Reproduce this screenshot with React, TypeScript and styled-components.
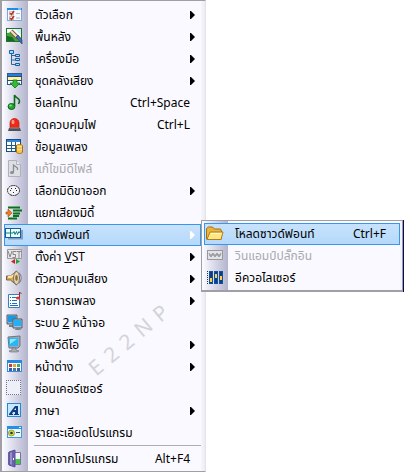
import React from 'react';
import styled, { createGlobalStyle, css } from 'styled-components';

const GlobalStyle = createGlobalStyle`
  * { box-sizing: border-box; }
  body { margin: 0; background: #fff; overflow: hidden; }
`;

const Page = styled.main`
  position: relative;
  display: flex;
  align-items: flex-start;
  font-family: "Noto Sans", "Open Sans", "Noto Sans Thai", Tahoma, sans-serif;
  font-size: 12px;
  color: #000;
`;

const panel = css`
  margin: 0;
  list-style: none;
  border: 1px solid #a0a0a4;
  background: linear-gradient(90deg, #f6f6fd 0, #cfcfe2 14px, #b3b3cc 24px, #f9f9ff 24px);
  background-origin: content-box;
`;

const Menu = styled.ul`
  ${panel}
  min-width: 206px;
  padding: 3px 4px 1px 2px;
  border-width: 1px 1px 1px 2px;
  border-right-color: #e4e4ea;
  box-shadow: 0 2px 0 #0a0a50;
`;

const SubMenu = styled.ul`
  ${panel}
  position: absolute;
  z-index: 2;
  top: -4px;
  left: 100%;
  min-width: 202px;
  padding: 2px 2px 1px 2px;
  border-width: 1px 1px 2px 1px;
  box-shadow: 1px 0 0 #0a0a50;
  color: #000;
`;

const Item = styled.li`
  position: relative;
`;

const Divider = styled.li`
  height: 1px;
  margin: 1px 0 2px 30px;
  background: #adadb2;
`;

const Row = styled.button<{ $active?: boolean }>`
  display: grid;
  grid-template-columns: 25px 1fr auto;
  align-items: center;
  width: 100%;
  height: 22px;
  padding: 0 10px 0 1px;
  border: 1px solid ${p => (p.$active ? '#3a96ea' : 'transparent')};
  background: ${p => (p.$active ? 'linear-gradient(#c7e2fc, #b5d9fb)' : 'transparent')};
  font: inherit;
  line-height: 18px;
  text-align: left;
  white-space: nowrap;
  color: inherit;
  &:disabled { color: #a9a9ad; }
  ${SubMenu} & { padding-right: 13px; }
`;

const Label = styled.span`
  padding-left: 4px;
`;

const Shortcut = styled.span`
  padding-left: 12px;
`;

const ArrowSvg = styled.svg<{ $light?: boolean }>`
  display: block;
  width: 5px;
  height: 8px;
  margin-right: -8px;
  fill: ${p => (p.$light ? '#fff' : '#000')};
`;

const IconSvg = styled.svg`
  display: block;
  width: 18px;
  height: 18px;
  overflow: visible;
`;

const Watermark = styled.span`
  position: absolute;
  z-index: 1;
  left: 79px;
  top: 325px;
  font-size: 21px;
  line-height: 24px;
  letter-spacing: 8px;
  color: #d3d3d8;
  transform: rotate(-40deg);
  pointer-events: none;
`;

const icons: Record<string, React.ReactNode> = {
  options: <>
    <rect x="1.5" y="2.5" width="14" height="12" fill="#f6f9fd" stroke="#7da9d5" />
    <path d="M1 2h15v2H1z" fill="#218bea" /><path d="M12 2.500h3v1h-3z" fill="#d8ecff" />
    <path d="M3.500 5.500h4v3.500h-4zM3.500 10.500h4V14h-4z" fill="#fff" stroke="#aaa" strokeWidth=".7" />
    <path d="M4 7l1.500 1.500L8 5M4 12l1.500 1.500 2.500-3.500" fill="none" stroke="#c23320" strokeWidth="1.600" />
    <path d="M10 7.500h4M10 12h4" stroke="#a9bac9" />
  </>,
  picture: <>
    <rect x=".5" y=".5" width="15" height="13" fill="#fff" stroke="#20752a" />
    <path d="M1 5l6-1 8 6v3H1z" fill="#45a63a" /><path d="M1 8l5 1 3 4H1z" fill="#176b24" />
    <path d="M9 1h6v6z" fill="#cdeeff" />
    <path d="M5 3l7 7" stroke="#715c48" strokeWidth="4" /><path d="M5 3l6 6" stroke="#f3dfbb" strokeWidth="2.200" />
    <path d="M10 9l2-2 4 5v4z" fill="#3c70b4" stroke="#26446c" strokeWidth=".7" />
  </>,
  tree: <>
    <path d="M5.500 4v10.500H9M5.500 5.500H9M5.500 10H9" fill="none" stroke="#26699c" />
    <g fill="#a9dcff" stroke="#175f9e"><path d="M3.500.5h4v3h-4zM9.500 4.500h4v2h-4zM9.500 8.500h4v2h-4zM9.500 13.500h4v2h-4z" /></g>
  </>,
  download: <>
    <rect x="1.500" y="1.500" width="14" height="11" fill="#fff" stroke="#315c8a" />
    <path d="M2 2h13v2H2z" fill="#287be0" /><path d="M2 5h13v3H2z" fill="#fff2a4" /><path d="M1 4.500h15M1 8.500h15" stroke="#244f72" />
    <path d="M7 8h4v3h3l-5 5-5-5h3z" fill="#35bc32" stroke="#13721c" strokeWidth=".8" />
  </>,
  note: <>
    <ellipse cx="5.500" cy="12.500" rx="3.400" ry="3" fill="#24a833" stroke="#086217" />
    <path d="M8.500 12V1c1 3 5 3 5 6 0 1-.5 2-1 3" fill="none" stroke="#0b6b1b" strokeWidth="1.600" />
    <ellipse cx="4.500" cy="11.500" rx="1.300" ry="1" fill="#86e58a" />
  </>,
  siren: <>
    <path d="M4 12V7c0-6 9-6 9 0v5z" fill="#f02817" stroke="#b51b10" strokeWidth=".7" />
    <ellipse cx="7" cy="6" rx="1.500" ry="2.200" fill="#ff9b83" />
    <path d="M3 12h11l1 3H2z" fill="#505058" /><path d="M4 12h9" stroke="#929299" />
  </>,
  database: <>
    <rect x=".5" y="1.500" width="14" height="12" fill="#fff" stroke="#174d86" />
    <path d="M1 2h13v2H1z" fill="#3185d8" /><path d="M1 7.500h13M1 10.500h13M5.500 4v9M9.500 4v9" stroke="#235d7d" />
    <path d="M10.500 8c0-2 6-2 6 0v6c0 2-6 2-6 0z" fill="#f5c44b" stroke="#a77110" />
    <path d="M11 8c1 1 4 1 5 0M11 11c1 1 4 1 5 0" fill="none" stroke="#fff0b0" />
  </>,
  midi: <>
    <path d="M2.500.5h8l4 4v12h-12z" fill="#dedee5" stroke="#b1b1ba" /><path d="M10.500.5v4h4" fill="#eee" stroke="#b1b1ba" />
    <ellipse cx="6" cy="12.500" rx="2" ry="1.600" fill="#8b8b93" /><path d="M7.500 12V5l4 3v2" fill="none" stroke="#8b8b93" strokeWidth="1.300" />
  </>,
  port: <>
    <ellipse cx="7.500" cy="8.500" rx="6" ry="5" fill="#f4f4f8" stroke="#222" strokeDasharray="2 .5" />
    <path d="M4 8h1v1H4zM5 6h1v1H5zM9 6h1v1H9zM10 8h1v1h-1zM7 10h1v1H7z" fill="#222" />
  </>,
  split: <>
    <path d="M2 3.500h12M7 6.500h9M7 9.500h7M2 14.500h9M7 12h6" stroke="#087319" strokeWidth="1.800" />
    <path d="M0 8h2V5l4 4-4 4v-3H0z" fill="#f07c20" stroke="#9c521e" strokeWidth=".6" />
  </>,
  wave: <>
    <path d="M2 4h15v9.500H2z" fill="#7d9fc5" /><rect x="-.5" y="2.500" width="15" height="9" fill="#e9ffff" stroke="#21569a" />
    <path d="M0 7h7l1-1.500 1 3 1.500-3 1 3 1.500-3 .5 1.500" fill="none" stroke="#137a7c" /><path d="M4.500 3v8" stroke="#137a7c" />
  </>,
  vst: <>
    <path d="M1.500 1.500h14v9h-14z" fill="#e8e8ec" stroke="#999" />
    <path d="M2 3l2 6 2-6M10 3.500H7v3h2.500v3H6.500M10.500 3.500h5M13 3v7" fill="none" stroke="#888" />
    <path d="M9 11v5l-4-2.500z" fill="#d32227" /><path d="M10 11v5l4-2.500z" fill="#20a23b" />
  </>,
  speaker: <>
    <path d="M.5 6h4l6-5v14l-6-5h-4z" fill="#dda749" stroke="#74644f" />
    <path d="M2 7h3l4-3" fill="none" stroke="#ffe6a1" strokeWidth="2" /><ellipse cx="10.500" cy="8" rx="3" ry="6.500" fill="#e5d3a4" stroke="#77736f" />
    <ellipse cx="10.500" cy="8" rx="1.300" ry="3" fill="#8b6b38" /><path d="M13 3c3 3 3 7 0 10" fill="none" stroke="#85858d" strokeWidth="1.200" />
  </>,
  list: <>
    <path d="M2.500 2.500h11v13h-11z" fill="#fff" stroke="#397fbd" />
    <path d="M4 5h1v1H4zM4 8h1v1H4zM4 11h1v1H4z" fill="#0965b2" /><path d="M6 5.500h5M6 8.500h5M6 11.500h5M4 13.500h8" stroke="#1d72b7" />
    <path d="M13.500 6V0l2 2" fill="none" stroke="#9e2626" /><ellipse cx="12" cy="6" rx="2" ry="1.500" fill="#df342f" />
  </>,
  monitors: <>
    <path d="M1 1h10v9H1z" fill="#9aafc1" stroke="#4d6277" /><path d="M2 2h8v6H2z" fill="#149ae8" />
    <path d="M3 11h6v2H3z" fill="#727f8b" /><path d="M7 5h9v9H7z" fill="#aebcc8" stroke="#4b6074" />
    <path d="M8 6h7v6H8z" fill="#23b0f5" /><path d="M10 14h4l1 2H9z" fill="#778591" />
  </>,
  monitor: <>
    <path d="M2 1l12-1v10l-2 2H3z" fill="#9ba9b7" stroke="#687785" /><path d="M3 2h9v8H3z" fill="#26b7f4" /><path d="M4 3h7L4 8z" fill="#95e7ff" />
    <path d="M6 12h4v2l3 1-2 1H4l-1-1 3-1z" fill="#a8adb2" stroke="#656c74" strokeWidth=".6" />
  </>,
  window: <>
    <rect x="1.500" y="2.500" width="14" height="11" fill="#f9fbff" stroke="#338ede" /><path d="M1 2h15v3H1z" fill="#2389e5" />
    <path d="M3 6h3v3H3z" fill="#b4463f" /><path d="M7 6h3v3H7z" fill="#dda53b" /><path d="M11 6h3v3h-3z" fill="#50a858" />
    <path d="M3 10h3v3H3z" fill="#2e5fbc" /><path d="M7 10h3v3H7z" fill="#557698" /><path d="M11 10h3v3h-3z" fill="#4a569d" />
  </>,
  cursor: <><rect x="0" y="0" width="15" height="15" fill="#efeff7" />
    <path d="M0 .5h15M0 14.500h15M.5 0v15M14.500 0v15" fill="none" stroke="#73738c" strokeDasharray="1 1" shapeRendering="crispEdges" /></>,
  language: <>
    <rect x="1.500" y="1.500" width="13" height="13" fill="#c5eaff" stroke="#2687d3" />
    <path d="M3 12L9 4h3v8H9v-2H7l-1 2z" fill="#123b87" /><path d="M8 8h2V6z" fill="#d7efff" /><path d="M3 12.500h4M8 12.500h5" stroke="#123b87" />
  </>,
  about: <>
    <rect x="1.500" y="2.500" width="14" height="11" fill="#e9f7ff" stroke="#4798d0" /><path d="M1 2h15v3H1z" fill="#2491e2" /><path d="M13 3h2v1h-2z" fill="#fff" />
    <circle cx="5.500" cy="9" r="3" fill="#e5dc39" stroke="#70803c" strokeWidth=".7" /><circle cx="5.500" cy="9" r="1.300" fill="#163840" /><path d="M10 8.500h4" stroke="#315b74" />
  </>,
  exit: <>
    <path d="M2.500 2.500h12v12h-12z" fill="#f4f5fa" stroke="#75759c" /><path d="M9 9h5v5H9z" fill="#45c84a" />
    <path d="M3 2l6-2v17l-6-2z" fill="#6e5fac" stroke="#5b4f9c" /><path d="M4 3l2-1v13l-2-1z" fill="#9990ce" /><path d="M7 8h1v2H7z" fill="#fff" />
  </>,
  folder: <>
    <path d="M.5 14V3.500l2-1.500h4l2 2h6l1 2v8z" fill="#e9b63c" stroke="#a66f15" />
    <path d="M1 14.500L4 7h13l-2 7.500z" fill="#ffe884" stroke="#b77b18" /><path d="M5 8.500h10" stroke="#fff8cf" />
  </>,
  plugin: <><rect x="1.500" y="3.500" width="15" height="9" fill="#e2e2e8" stroke="#999" /><path d="M3 6l2 4 2-4 2 4 2-4 2 4 2-4M3 8h12" fill="none" stroke="#92929a" /></>,
  equalizer: <>
    <path d="M1.500 2v13" stroke="#333" strokeDasharray="1 1" /><path d="M3 2h4v13H3zM8 2h4v13H8zM13 2h4v13h-4z" fill="#12519f" />
    <path d="M5 3v11M10 3v11M15 3v11" stroke="#082b65" /><path d="M4 9h2v4H4zM9 5h2v4H9zM14 7h2v4h-2z" fill="#ffd046" />
  </>,
};

function Icon({ name }: { name: string }) {
  return <IconSvg viewBox="0 0 18 18" aria-hidden="true">{icons[name]}</IconSvg>;
}

type Entry = {
  icon: string;
  label: React.ReactNode;
  shortcut?: string;
  arrow?: boolean;
  active?: boolean;
  disabled?: boolean;
  children?: Entry[];
};

const entries: Entry[] = [
  { icon: 'options', label: 'ตัวเลือก', arrow: true },
  { icon: 'picture', label: 'พื้นหลัง', arrow: true },
  { icon: 'tree', label: 'เครื่องมือ', arrow: true },
  { icon: 'download', label: 'ชุดคลังเสียง', arrow: true },
  { icon: 'note', label: 'อีเลคโทน', shortcut: 'Ctrl+Space' },
  { icon: 'siren', label: 'ชุดควบคุมไฟ', shortcut: 'Ctrl+L' },
  { icon: 'database', label: 'ข้อมูลเพลง' },
  { icon: 'midi', label: 'แก้ไขมิดีไฟล์', disabled: true },
  { icon: 'port', label: 'เลือกมิดิขาออก', arrow: true },
  { icon: 'split', label: 'แยกเสียงมิดี้' },
  {
    icon: 'wave', label: 'ซาวด์ฟอนท์', arrow: true, active: true,
    children: [
      { icon: 'folder', label: 'โหลดซาวด์ฟอนท์', shortcut: 'Ctrl+F', active: true },
      { icon: 'plugin', label: 'วินแอมป์ปลั๊กอิน', disabled: true },
      { icon: 'equalizer', label: 'อีควอไลเซอร์' },
    ],
  },
  { icon: 'vst', label: <>ตั้งค่า <u>V</u>ST</>, arrow: true },
  { icon: 'speaker', label: 'ตัวควบคุมเสียง', arrow: true },
  { icon: 'list', label: 'รายการเพลง', arrow: true },
  { icon: 'monitors', label: <>ระบบ <u>2</u> หน้าจอ</> },
  { icon: 'monitor', label: 'ภาพวีดีโอ', arrow: true },
  { icon: 'window', label: 'หน้าต่าง', arrow: true },
  { icon: 'cursor', label: 'ซ่อนเคอร์เซอร์' },
  { icon: 'language', label: 'ภาษา', arrow: true },
  { icon: 'about', label: 'รายละเอียดโปรแกรม' },
];

function MenuItem({ entry }: { entry: Entry }) {
  return (
    <Item role="none">
      <Row type="button" role="menuitem" $active={entry.active} disabled={entry.disabled}
        aria-haspopup={entry.arrow ? 'menu' : undefined}
        aria-expanded={entry.children ? true : undefined}>
        <Icon name={entry.icon} />
        <Label>{entry.label}</Label>
        {entry.shortcut && <Shortcut>{entry.shortcut}</Shortcut>}
        {entry.arrow && <ArrowSvg $light={entry.active} viewBox="0 0 5 8" aria-hidden="true"><path d="M0 0h1l4 4-4 4H0z" /></ArrowSvg>}
      </Row>
      {entry.children && (
        <SubMenu role="menu">
          {entry.children.map(child => <MenuItem key={child.icon} entry={child} />)}
        </SubMenu>
      )}
    </Item>
  );
}

export default function App() {
  return (
    <>
      <GlobalStyle />
      <Page>
        <Menu role="menu">
          {entries.map(entry => <MenuItem key={entry.icon} entry={entry} />)}
          <Divider role="separator" />
          <MenuItem entry={{ icon: 'exit', label: 'ออกจากโปรแกรม', shortcut: 'Alt+F4' }} />
        </Menu>
        <Watermark>E22NP</Watermark>
      </Page>
    </>
  );
}
